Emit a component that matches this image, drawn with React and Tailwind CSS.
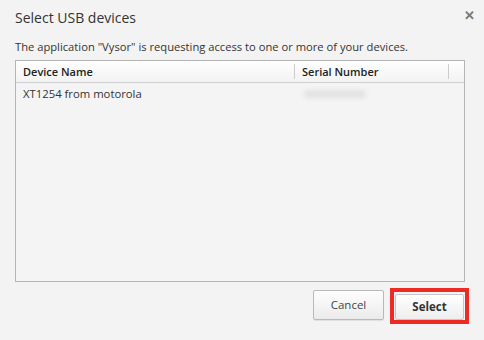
import React from 'react';

function App() {
  return (
    <div
      className="relative w-[484px] h-[340px] bg-[#f4f3f4] text-[#333] overflow-hidden"
      style={{ fontFamily: '"Open Sans", "Noto Sans", sans-serif' }}
    >
      <div className="flex flex-col px-[15px] pt-[7px]">
        <div className="flex items-start justify-between">
          <h1 className="text-[14px] leading-[22px] text-[#333]">Select USB devices</h1>
          <button className="mr-[-6px] mt-[2px] text-[13px] font-bold leading-none text-[#777]">✕</button>
        </div>
        <p className="mt-[10px] text-[11.2px] leading-[16px] text-[#333]">
          The application "Vysor" is requesting access to one or more of your devices.
        </p>

        <div className="mt-[5px] h-[222px] w-[450px] border border-[#b5b5b5] bg-[#f5f4f5] flex flex-col">
          <div className="flex h-[22px] border-b border-[#cfcfcf] bg-gradient-to-b from-[#fefefe] to-[#f3f3f3] text-[11px] font-semibold text-[#222]">
            <div className="w-[279px] pl-[7px] border-r border-[#ccc] my-[3px] leading-[16px]">Device Name</div>
            <div className="w-[154px] pl-[7px] border-r border-[#ccc] my-[3px] leading-[16px]">Serial Number</div>
          </div>
          <div className="flex h-[22px] items-center text-[11.3px] text-[#333]">
            <div className="w-[280px] pl-[7px]">XT1254 from motorola</div>
            <div className="pl-[8px]">
              <div className="h-[8px] w-[62px] rounded-full bg-[#e3e2e3] blur-[2px]" />
            </div>
          </div>
        </div>

        <div className="mt-[6px] flex justify-end gap-[6px]">
          <button className="mt-[2px] h-[30px] w-[71px] rounded-[2px] border border-[#b9b9b9] bg-gradient-to-b from-[#fefefe] to-[#ebebeb] text-[11.5px] text-[#444] shadow-[0_1px_0_rgba(0,0,0,0.08)]">
            Cancel
          </button>
          <div className="h-[36px] w-[79px] border-[4px] border-[#ee2a24] p-[1px]">
            <button className="h-full w-full rounded-[2px] border border-[#c5c5c5] bg-gradient-to-b from-[#fefefe] to-[#eeeeee] text-[11.5px] font-bold text-[#333]">
              Select
            </button>
          </div>
        </div>
      </div>
    </div>
  );
}

export default App;
